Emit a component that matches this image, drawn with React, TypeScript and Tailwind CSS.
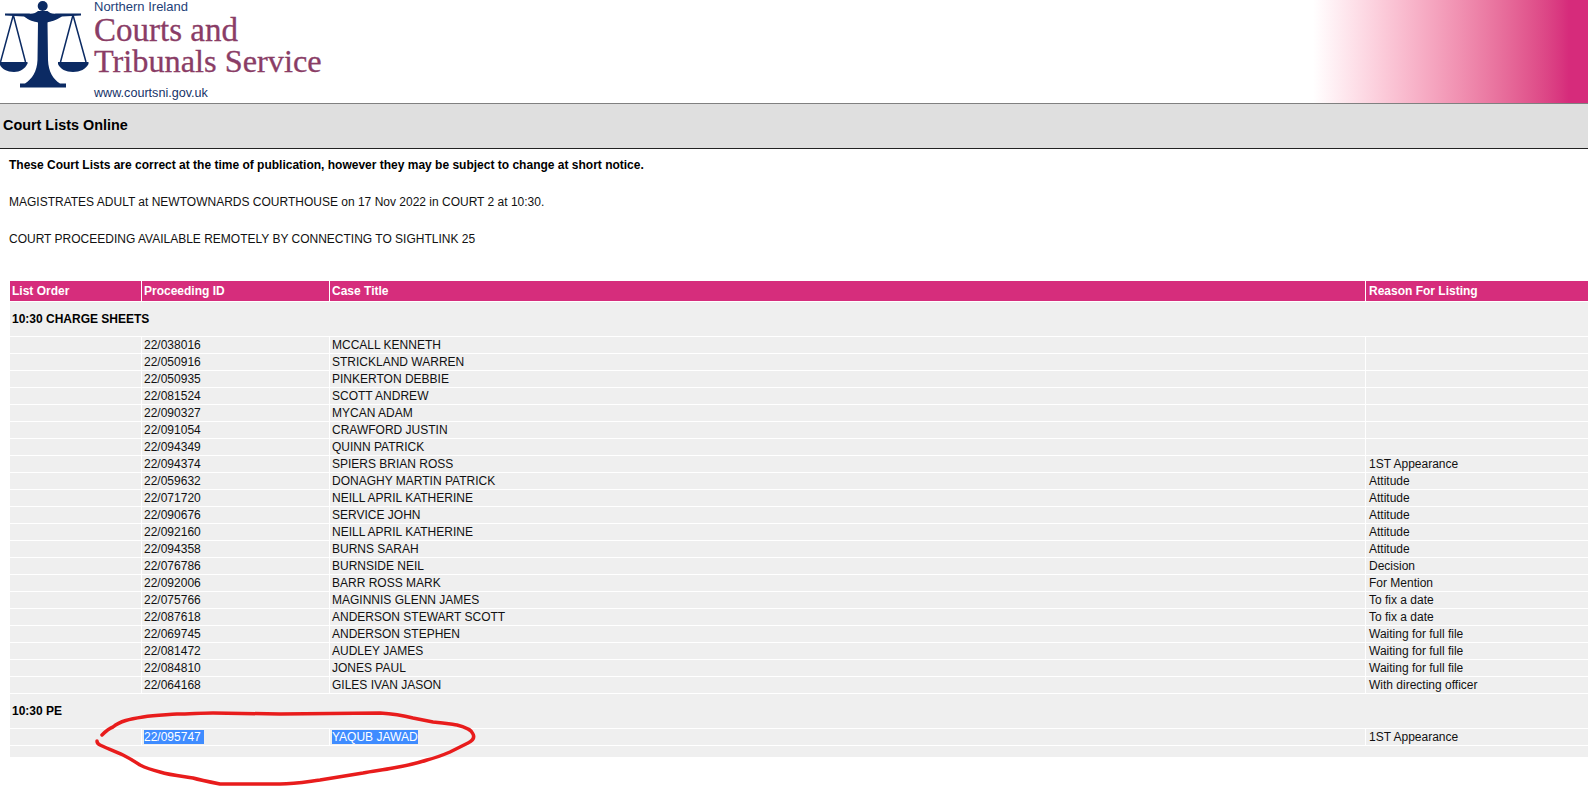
const arial = { fontFamily: '"Liberation Sans", Arial, sans-serif' };

const chargeSheets = [
  ['22/038016', 'MCCALL KENNETH', ''],
  ['22/050916', 'STRICKLAND WARREN', ''],
  ['22/050935', 'PINKERTON DEBBIE', ''],
  ['22/081524', 'SCOTT ANDREW', ''],
  ['22/090327', 'MYCAN ADAM', ''],
  ['22/091054', 'CRAWFORD JUSTIN', ''],
  ['22/094349', 'QUINN PATRICK', ''],
  ['22/094374', 'SPIERS BRIAN ROSS', '1ST Appearance'],
  ['22/059632', 'DONAGHY MARTIN PATRICK', 'Attitude'],
  ['22/071720', 'NEILL APRIL KATHERINE', 'Attitude'],
  ['22/090676', 'SERVICE JOHN', 'Attitude'],
  ['22/092160', 'NEILL APRIL KATHERINE', 'Attitude'],
  ['22/094358', 'BURNS SARAH', 'Attitude'],
  ['22/076786', 'BURNSIDE NEIL', 'Decision'],
  ['22/092006', 'BARR ROSS MARK', 'For Mention'],
  ['22/075766', 'MAGINNIS GLENN JAMES', 'To fix a date'],
  ['22/087618', 'ANDERSON STEWART SCOTT', 'To fix a date'],
  ['22/069745', 'ANDERSON STEPHEN', 'Waiting for full file'],
  ['22/081472', 'AUDLEY JAMES', 'Waiting for full file'],
  ['22/084810', 'JONES PAUL', 'Waiting for full file'],
  ['22/064168', 'GILES IVAN JASON', 'With directing officer'],
];

function ScalesLogo() {
  return (
    <svg className="h-[90px] w-[90px] shrink-0" viewBox="0 0 90 90" fill="#0b2a63">
      <circle cx="42.7" cy="6" r="5" />
      <path d="M5 13.5 L28 13.5 C33 14 36 13 38 11 L47.5 11 C49.5 13 52 14 57 13.5 L81 13.5 L81 15.5 L62 16.5 C56 20.5 50 21.5 47.5 22.5 L48 60 C48.5 72 53 79 60 83.5 L66 83.5 L66 87.5 L20 87.5 L20 83.5 L25 83.5 C32 79 37 72 37.5 60 L38 22.5 C34 21.5 29 20.5 24 16.5 L5 15.5 Z" />
      <path d="M0 62 L27.5 62 L27.5 63.5 C25 69 20 72 14 72 C7 72 2 69 0 65 Z" />
      <path d="M58 62 L88.5 62 L88.5 64 C86 69 80 72 73 72 C66 72 60 69 58 64 Z" />
      <path d="M13.3 15 L0.5 62 M13.3 15 L25.5 62 M73 15 L60.5 62 M73 15 L86 62" stroke="#0b2a63" strokeWidth="1.5" fill="none" />
    </svg>
  );
}

function DataRow({ row, selected }: { row: string[]; selected?: boolean }) {
  return (
    <tr className="h-4">
      <td className="bg-[#efefef]" />
      <td className="bg-[#efefef] px-[2px] py-0">
        {selected ? <span className="bg-[#3f8cff] text-white">{row[0]}&nbsp;</span> : row[0]}
      </td>
      <td className="bg-[#efefef] px-[2px] py-0">
        {selected ? <span className="bg-[#3f8cff] text-white">{row[1]}</span> : row[1]}
      </td>
      <td className="bg-[#efefef] px-[3px] py-0">{row[2]}</td>
    </tr>
  );
}

function SectionRow({ title }: { title: string }) {
  return (
    <tr className="h-[34px]">
      <td colSpan={4} className="bg-[#efefef] px-[2px] font-bold text-black">
        {title}
      </td>
    </tr>
  );
}

export default function App() {
  return (
    <div className="relative h-[788px] w-[1588px] overflow-hidden bg-white text-xs text-[#111]" style={arial}>
      <header className="flex h-[103px] justify-between">
        <div className="flex">
          <ScalesLogo />
          <div className="ml-[4px] text-[#8a3d66]">
            <div className="h-[15px] text-[13px] leading-[14px] text-[#1d3f78]">Northern Ireland</div>
            <div className="h-[31px] font-['Liberation_Serif',serif] text-[33px] leading-[31px] [-webkit-text-stroke:0.3px_#8a3d66]">Courts and</div>
            <div className="h-[31px] font-['Liberation_Serif',serif] text-[32.3px] leading-[31px] [-webkit-text-stroke:0.3px_#8a3d66]">Tribunals Service</div>
            <div className="mt-[9px] text-[12.6px] leading-[14px] text-[#163268]">www.courtsni.gov.uk</div>
          </div>
        </div>
        <div className="h-full w-[275px] bg-linear-to-r from-white from-0% to-[#d62b7b] to-93%" />
      </header>

      <div className="flex h-[46px] items-center border-t border-b border-t-[#808080] border-b-[#222] bg-[#dfdfdf] pl-[3px] text-[14.4px] font-bold text-black">
        Court Lists Online
      </div>

      <div className="pl-[9px] pt-[9px]">
        <p className="h-[37px] leading-[14px] font-bold text-black">
          These Court Lists are correct at the time of publication, however they may be subject to change at short notice.
        </p>
        <p className="h-[37px] leading-[14px]">MAGISTRATES ADULT at NEWTOWNARDS COURTHOUSE on 17 Nov 2022 in COURT 2 at 10:30.</p>
        <p className="h-[37px] leading-[14px]">COURT PROCEEDING AVAILABLE REMOTELY BY CONNECTING TO SIGHTLINK 25</p>
      </div>

      <table className="ml-[9px] mt-[11px] w-[1600px] table-fixed border-separate border-spacing-[1px] text-left">
        <colgroup>
          <col className="w-[131px]" />
          <col className="w-[187px]" />
          <col className="w-[1035px]" />
          <col />
        </colgroup>
        <thead>
          <tr className="h-5 bg-[#d62d7c] font-bold text-white">
            <th className="px-[2px] py-0">List Order</th>
            <th className="px-[2px] py-0">Proceeding ID</th>
            <th className="px-[2px] py-0">Case Title</th>
            <th className="px-[3px] py-0">Reason For Listing</th>
          </tr>
        </thead>
        <tbody>
          <SectionRow title="10:30 CHARGE SHEETS" />
          {chargeSheets.map((row) => (
            <DataRow key={row[0]} row={row} />
          ))}
          <SectionRow title="10:30 PE" />
          <DataRow row={['22/095747', 'YAQUB JAWAD', '1ST Appearance']} selected />
          <tr className="h-[11px]">
            <td colSpan={4} className="bg-[#efefef]" />
          </tr>
        </tbody>
      </table>

      {/* hand-drawn circle around the highlighted row */}
      <svg className="pointer-events-none absolute top-0 left-0 h-[788px] w-[1588px]" viewBox="0 0 1588 788" fill="none">
        <path
          d="M102 735 C105 732 110 728 113 727 C120 721 130 719 143 717 C155 715 165 715 177 714 C190 714 200 713 213 713 L280 714 L380 713 C395 714 405 716 413 718 L433 722 C445 723 450 724 457 725 C465 727 472 730 473 734 C475 738 472 741 468 743 C462 746 456 749 450 752 C443 755 435 758 427 760 C415 764 405 766 393 768 C383 770 373 771 363 773 L320 780 C305 782 295 784 280 784 L220 784 C210 782 200 780 193 778 C180 776 170 775 160 772 C152 770 146 768 140 765 C134 761 129 758 123 755 C115 751 106 748 100 745 C98 744 97 743 97 741"
          stroke="#e81c1c"
          strokeWidth="3.5"
          strokeLinecap="round"
        />
      </svg>
    </div>
  );
}
